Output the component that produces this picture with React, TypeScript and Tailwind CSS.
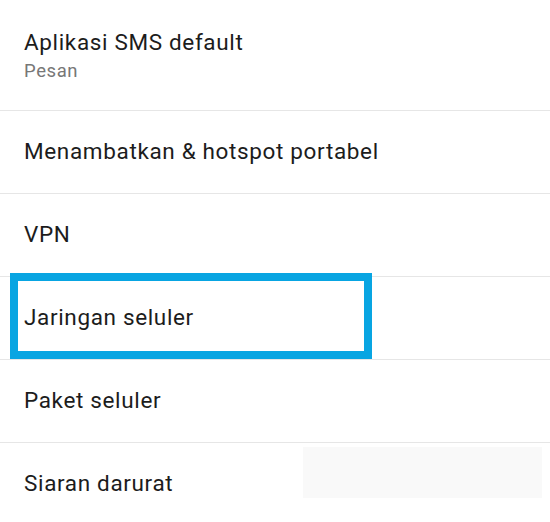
const rows = [
  { title: 'Menambatkan & hotspot portabel' },
  { title: 'VPN' },
  { title: 'Jaringan seluler' },
  { title: 'Paket seluler' },
  { title: 'Siaran darurat' },
]

export default function App() {
  return (
    <div className="relative w-[550px] h-[522px] overflow-hidden bg-white font-['Roboto',sans-serif]">
      {/* First item with summary */}
      <div className="h-[111px] border-b border-[#e6e6e6] px-[24px] pt-[27px]">
        <p className="text-[22.5px] leading-[30px] tracking-[0.65px] text-[#1c1c1c]">Aplikasi SMS default</p>
        <p className="text-[18.5px] leading-[24px] tracking-[0.6px] text-[#777777] mt-[2px]">Pesan</p>
      </div>

      {rows.map((r) => (
        <div
          key={r.title}
          className="h-[83px] border-b border-[#e6e6e6] px-[24px] flex items-center"
        >
          <p className="text-[22.5px] tracking-[0.65px] text-[#1c1c1c]">{r.title}</p>
        </div>
      ))}

      {/* highlight annotation */}
      <div className="absolute left-[10px] top-[273px] w-[362px] h-[86px] border-[8px] border-[#08a5e2]" />

      {/* faint toast remnant */}
      <div className="absolute left-[303px] top-[447px] w-[239px] h-[51px] bg-[#f9f9f9]" />
    </div>
  )
}
